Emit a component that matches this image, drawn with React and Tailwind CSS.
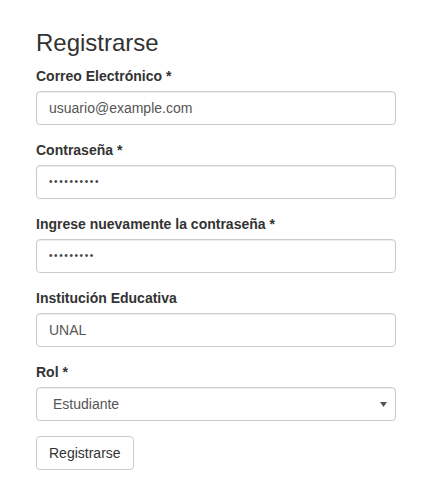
export default function App() {
  const font = { fontFamily: '"Liberation Sans", Arial, Helvetica, sans-serif' };
  const box = "h-[34px] w-full rounded-[4px] border border-[#ccc] bg-white px-3 flex items-center text-[14px] text-[#555] shadow-[inset_0_1px_1px_rgba(0,0,0,0.075)]";
  const label = "block text-[14px] leading-[20px] font-bold text-[#333] mb-[5px]";
  const dots = (n) => (
    <span className="text-[10px] tracking-[1.6px] text-[#444] leading-none">{"•".repeat(n)}</span>
  );
  return (
    <div style={font} className="min-h-[489px] w-[447px] bg-white text-[#333]">
      <div className="pl-[36px] pr-[51px] pt-[30px]">
        <h3 className="text-[24px] leading-[26px] font-normal mb-[10px]">Registrarse</h3>
        <div className="mb-[15px]">
          <label className={label}>Correo Electrónico *</label>
          <div className={box}>usuario@example.com</div>
        </div>
        <div className="mb-[15px]">
          <label className={label}>Contraseña *</label>
          <div className={box}>{dots(10)}</div>
        </div>
        <div className="mb-[15px]">
          <label className={label}>Ingrese nuevamente la contraseña *</label>
          <div className={box}>{dots(9)}</div>
        </div>
        <div className="mb-[15px]">
          <label className={label}>Institución Educativa</label>
          <div className={box}>UNAL</div>
        </div>
        <div className="mb-[15px]">
          <label className={label}>Rol *</label>
          <div className={box + " justify-between pr-[8px]"}>
            <span className="pl-[4px]">Estudiante</span>
            <svg width="7" height="5" viewBox="0 0 7 5"><path d="M0 0H7L3.5 5Z" fill="#555" /></svg>
          </div>
        </div>
        <button className="h-[34px] rounded-[4px] border border-[#ccc] bg-white px-3 text-[14px] text-[#333]">Registrarse</button>
      </div>
    </div>
  );
}
